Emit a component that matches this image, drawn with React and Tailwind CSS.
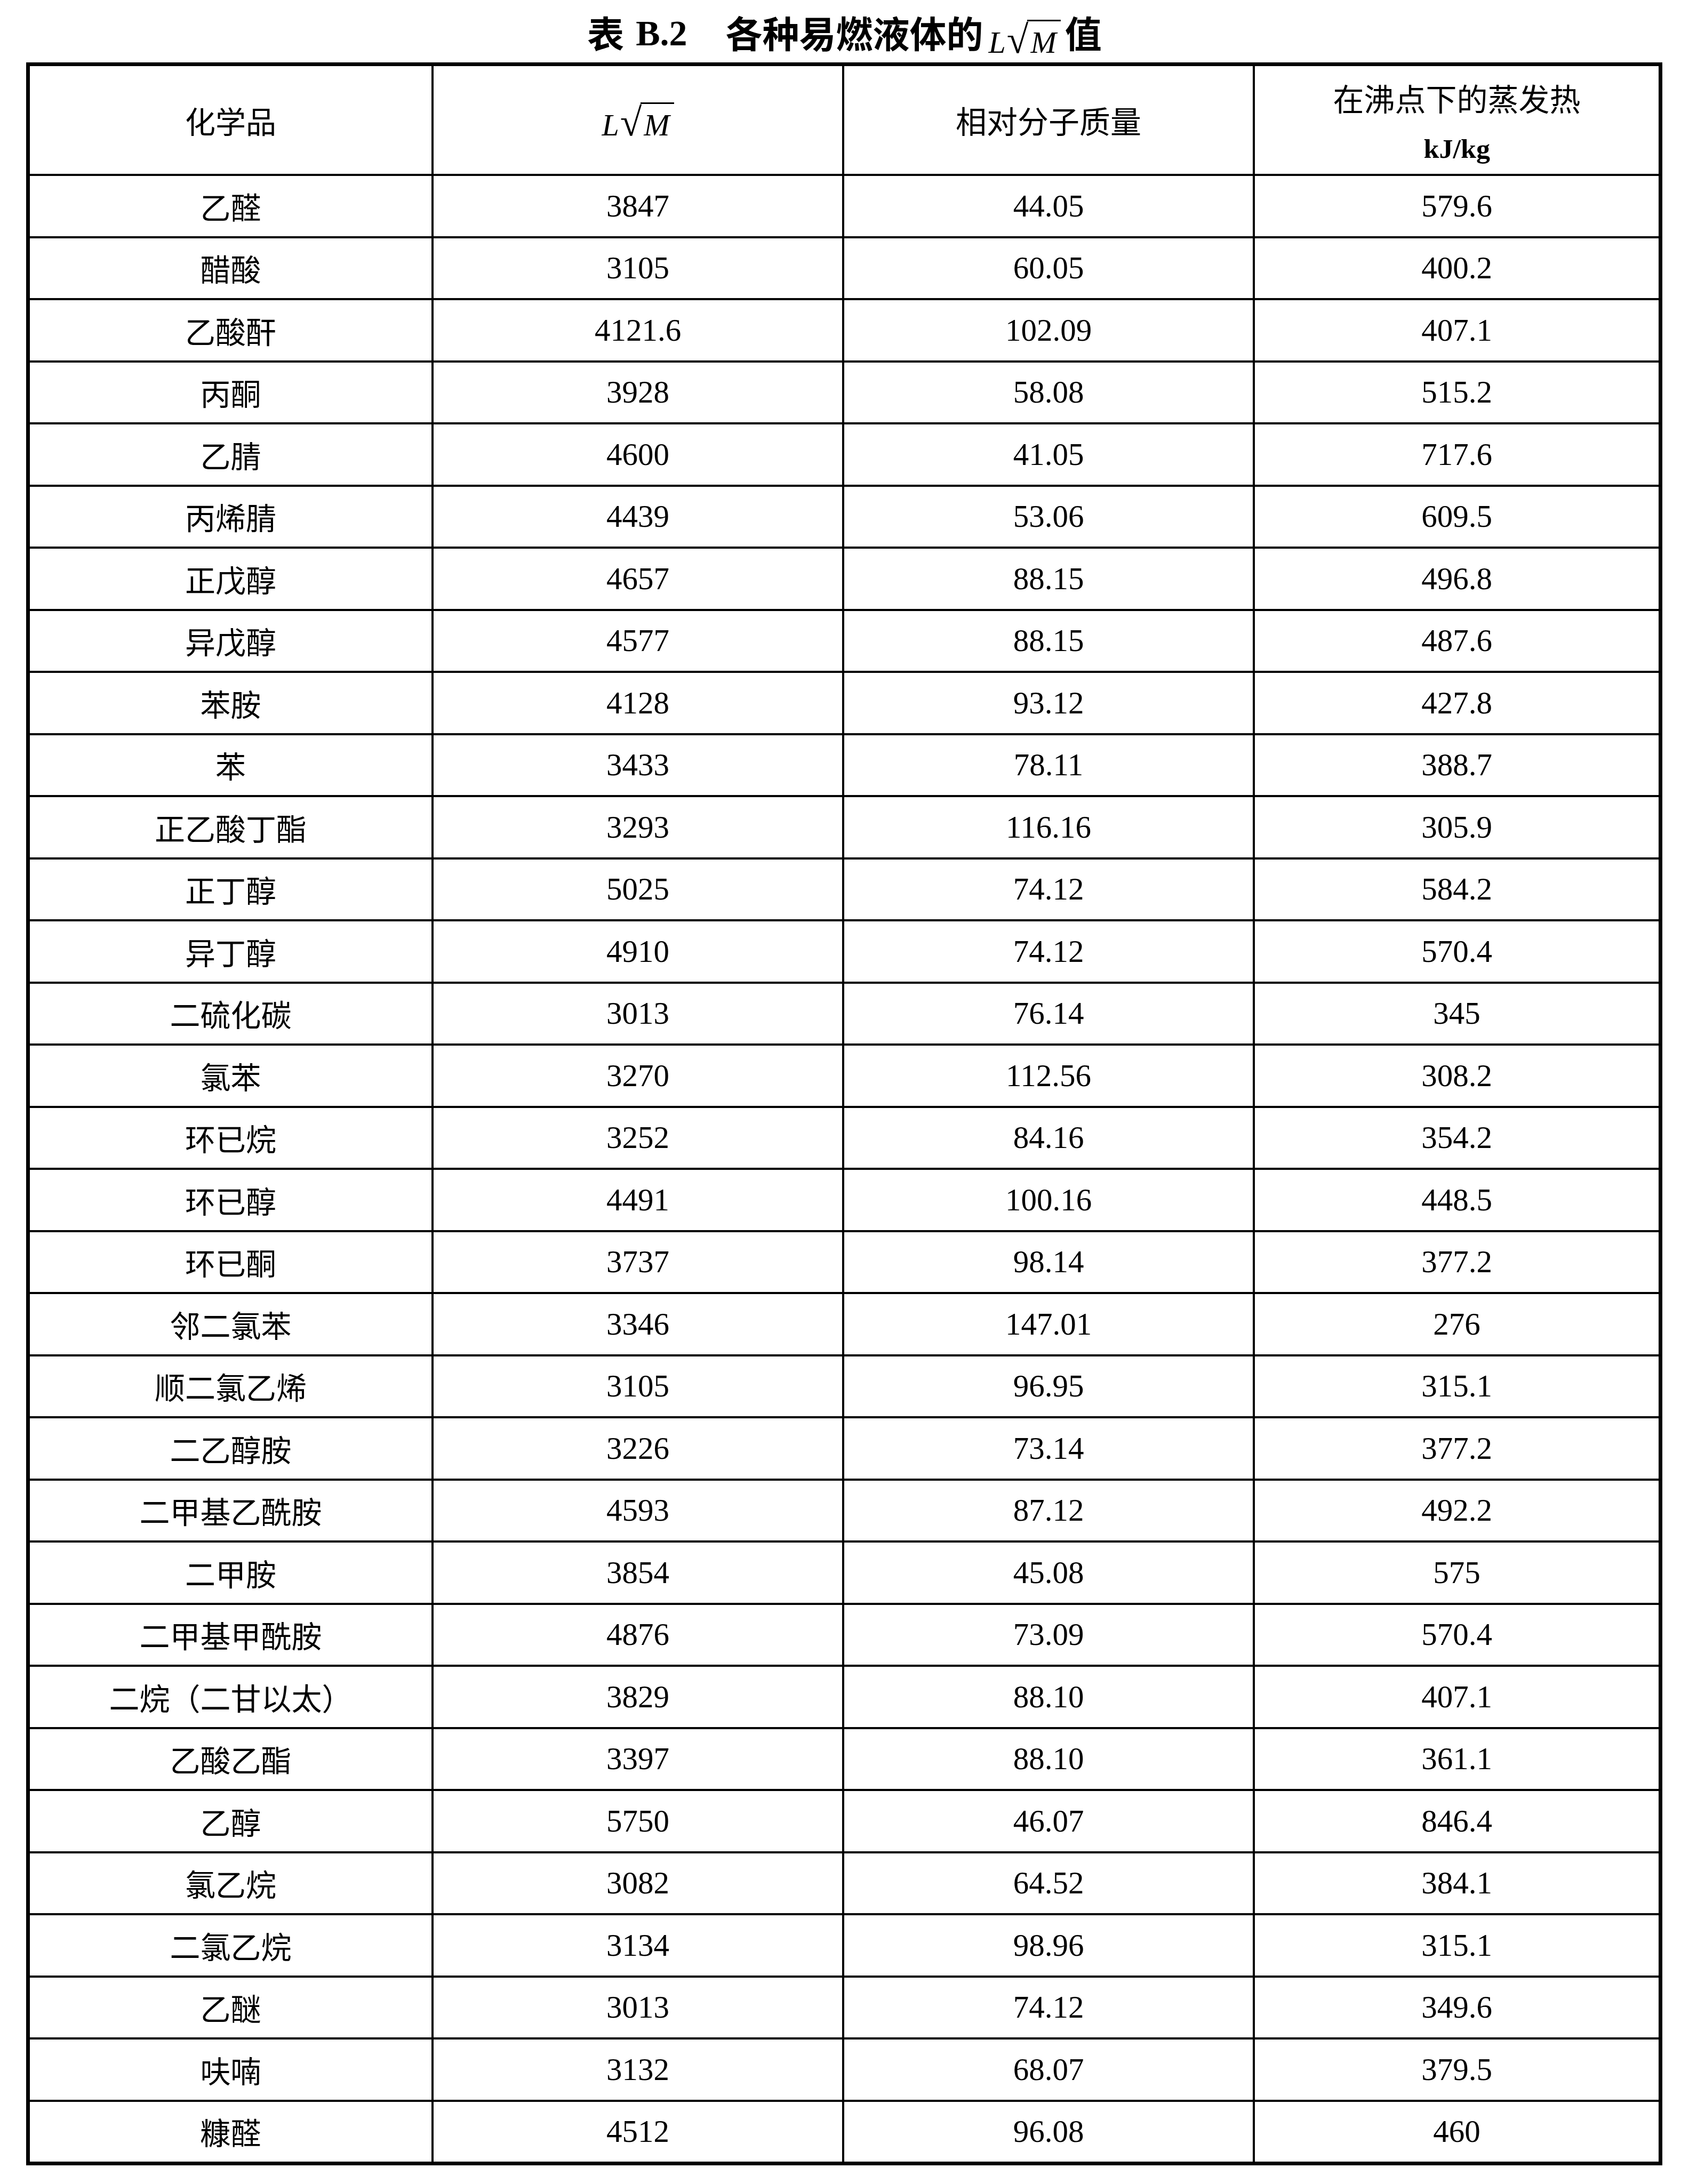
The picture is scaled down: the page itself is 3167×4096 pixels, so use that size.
import React from 'react';

const rows = [
  ['乙醛', '3847', '44.05', '579.6'],
  ['醋酸', '3105', '60.05', '400.2'],
  ['乙酸酐', '4121.6', '102.09', '407.1'],
  ['丙酮', '3928', '58.08', '515.2'],
  ['乙腈', '4600', '41.05', '717.6'],
  ['丙烯腈', '4439', '53.06', '609.5'],
  ['正戊醇', '4657', '88.15', '496.8'],
  ['异戊醇', '4577', '88.15', '487.6'],
  ['苯胺', '4128', '93.12', '427.8'],
  ['苯', '3433', '78.11', '388.7'],
  ['正乙酸丁酯', '3293', '116.16', '305.9'],
  ['正丁醇', '5025', '74.12', '584.2'],
  ['异丁醇', '4910', '74.12', '570.4'],
  ['二硫化碳', '3013', '76.14', '345'],
  ['氯苯', '3270', '112.56', '308.2'],
  ['环已烷', '3252', '84.16', '354.2'],
  ['环已醇', '4491', '100.16', '448.5'],
  ['环已酮', '3737', '98.14', '377.2'],
  ['邻二氯苯', '3346', '147.01', '276'],
  ['顺二氯乙烯', '3105', '96.95', '315.1'],
  ['二乙醇胺', '3226', '73.14', '377.2'],
  ['二甲基乙酰胺', '4593', '87.12', '492.2'],
  ['二甲胺', '3854', '45.08', '575'],
  ['二甲基甲酰胺', '4876', '73.09', '570.4'],
  ['二烷（二甘以太）', '3829', '88.10', '407.1'],
  ['乙酸乙酯', '3397', '88.10', '361.1'],
  ['乙醇', '5750', '46.07', '846.4'],
  ['氯乙烷', '3082', '64.52', '384.1'],
  ['二氯乙烷', '3134', '98.96', '315.1'],
  ['乙醚', '3013', '74.12', '349.6'],
  ['呋喃', '3132', '68.07', '379.5'],
  ['糠醛', '4512', '96.08', '460'],
];

const cjk = "font-['Noto_Sans_CJK_SC',sans-serif]";
const serif = "font-['Liberation_Serif','Noto_Sans_CJK_SC',serif]";

// L√M as printed: italic L and M, radical whose bar runs over the M
function LRootM({ className = '' }) {
  return (
    <span className={`inline-flex items-baseline leading-none text-[58px] ${serif} ${className}`}>
      <span className="italic">L</span>
      <span className="text-[74px] ml-[2px] -mr-[2px]">√</span>
      <span className="italic border-t-[3px] border-black pt-[11px] pl-[6px] pr-[8px]">M</span>
    </span>
  );
}

const cell = 'flex items-center justify-center border-r-4 border-black';
const lastCell = 'flex items-center justify-center';

export default function App() {
  return (
    <div className="w-[3167px] h-[4096px] bg-white text-black">
      {/* title */}
      <div className="h-[117px] flex justify-center pt-[26px]">
        <div className="flex items-baseline leading-none h-[80px]">
          <span className={`text-[69px] font-bold ${cjk}`}>表</span>
          <span className={`ml-[22px] text-[68px] font-bold -translate-y-[5px] ${serif}`}>B.2</span>
          <span className={`ml-[72px] text-[69px] font-bold ${cjk}`}>各种易燃液体的</span>
          <LRootM className="ml-[10px] translate-y-[9px]" />
          <span className={`ml-[8px] text-[69px] font-bold ${cjk}`}>值</span>
        </div>
      </div>

      {/* table */}
      <div className="ml-[49px] w-[3068px] border-[7px] border-black">
        <div className="grid grid-cols-[757px_770px_770px_757px] h-[206px] border-b-4 border-black">
          <div className={cell}>
            <span className={`text-[57px] leading-none ${cjk}`}>化学品</span>
          </div>
          <div className={`${cell} pt-[7px]`}>
            <LRootM />
          </div>
          <div className={cell}>
            <span className={`text-[58px] leading-none ${cjk}`}>相对分子质量</span>
          </div>
          <div className="flex flex-col items-center justify-center pt-[8px]">
            <div className={`text-[58px] leading-none ${cjk}`}>在沸点下的蒸发热</div>
            <div className={`mt-[42px] text-[50px] font-bold leading-none scale-x-[1.04] ${serif}`}>kJ/kg</div>
          </div>
        </div>

        {rows.map((r, i) => (
          <div
            key={i}
            className={
              i < rows.length - 1
                ? 'grid grid-cols-[757px_770px_770px_757px] h-[116.5px] border-b-4 border-black'
                : 'grid grid-cols-[757px_770px_770px_757px] h-[112.5px]'
            }
          >
            <div className={cell}>
              <span className={`text-[57px] leading-none ${cjk}`}>{r[0]}</span>
            </div>
            <div className={cell}>
              <span className={`text-[59px] leading-none ${serif}`}>{r[1]}</span>
            </div>
            <div className={cell}>
              <span className={`text-[59px] leading-none ${serif}`}>{r[2]}</span>
            </div>
            <div className={lastCell}>
              <span className={`text-[59px] leading-none ${serif}`}>{r[3]}</span>
            </div>
          </div>
        ))}
      </div>
    </div>
  );
}
